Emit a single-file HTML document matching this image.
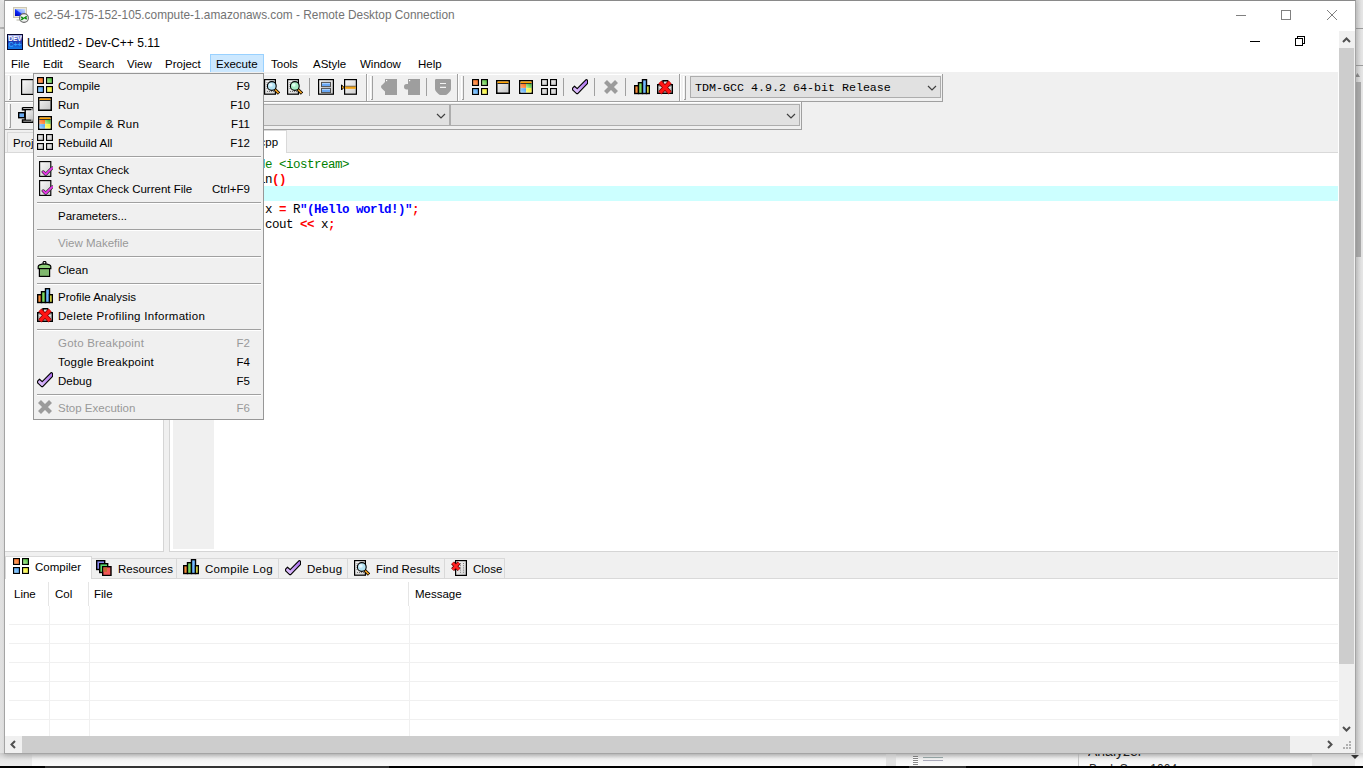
<!DOCTYPE html>
<html><head><meta charset="utf-8">
<style>
*{box-sizing:border-box;margin:0;padding:0}
html,body{width:1363px;height:768px;overflow:hidden;background:#e6e6e6;font-family:"Liberation Sans",sans-serif;font-size:11.5px;color:#000}
.a{position:absolute}
.t{position:absolute;white-space:nowrap;line-height:14px}
svg.i{position:absolute;overflow:visible;width:16px;height:16px}
.code{position:absolute;left:216px;font-family:"Liberation Mono",monospace;font-size:12.5px;letter-spacing:-0.5px;line-height:15px;white-space:pre;color:#000;margin-top:2px}
.m{position:absolute;left:58px;white-space:nowrap;line-height:14px;margin-top:-1px}
.k{position:absolute;right:13px;white-space:nowrap;line-height:14px;text-align:right;margin-top:-1px}
.dis{color:#999}
.sep{position:absolute;left:3px;width:224px;height:2px;border-top:1px solid #a0a0a0;border-bottom:1px solid #fff}
</style></head><body>
<svg width="0" height="0" style="position:absolute">
<defs>
 <linearGradient id="gO" x1="0" y1="1" x2="1" y2="0"><stop offset="0" stop-color="#ffb27a"/><stop offset="1" stop-color="#ff6a1a"/></linearGradient>
 <linearGradient id="gG" x1="0" y1="1" x2="1" y2="0"><stop offset="0" stop-color="#c8f5b0"/><stop offset="1" stop-color="#3cb82c"/></linearGradient>
 <linearGradient id="gB" x1="0" y1="1" x2="1" y2="0"><stop offset="0" stop-color="#a8dcff"/><stop offset="1" stop-color="#4a9cf5"/></linearGradient>
 <linearGradient id="gY" x1="0" y1="1" x2="1" y2="0"><stop offset="0" stop-color="#ffff9a"/><stop offset="1" stop-color="#f5f020"/></linearGradient>
 <linearGradient id="gR" x1="0" y1="0" x2="1" y2="1"><stop offset="0" stop-color="#f4f4f4"/><stop offset="1" stop-color="#c4c4c4"/></linearGradient>
 <linearGradient id="gD" x1="0" y1="0" x2="1" y2="1"><stop offset="0" stop-color="#fafafa"/><stop offset=".5" stop-color="#e4e4e4"/><stop offset="1" stop-color="#cfcfcf"/></linearGradient>
 <linearGradient id="gP" x1="0" y1="1" x2="1" y2="0"><stop offset="0" stop-color="#e8d0ff"/><stop offset="1" stop-color="#a868f0"/></linearGradient>
 <symbol id="i-compile" viewBox="0 0 16 16">
  <g stroke="#000" stroke-width="1.15">
  <rect x="0.58" y="0.58" width="5.85" height="5.85" fill="url(#gO)"/>
  <rect x="9.58" y="0.58" width="5.85" height="5.85" fill="url(#gG)"/>
  <rect x="0.58" y="9.58" width="5.85" height="5.85" fill="url(#gB)"/>
  <rect x="9.58" y="9.58" width="5.85" height="5.85" fill="url(#gY)"/>
  </g>
 </symbol>
 <symbol id="i-rebuild" viewBox="0 0 16 16">
  <g stroke="#000" stroke-width="1.15" fill="url(#gR)">
  <rect x="0.58" y="0.58" width="5.85" height="5.85"/>
  <rect x="9.58" y="0.58" width="5.85" height="5.85"/>
  <rect x="0.58" y="9.58" width="5.85" height="5.85"/>
  <rect x="9.58" y="9.58" width="5.85" height="5.85"/>
  </g>
 </symbol>
 <symbol id="i-run" viewBox="0 0 16 16">
  <rect x="1.75" y="1.75" width="12.5" height="12.5" fill="url(#gR)" stroke="#000" stroke-width="1.5"/>
  <rect x="2.5" y="2.5" width="11" height="1.5" fill="#ffa200"/>
  <rect x="2.5" y="4" width="11" height="0.9" fill="#111"/>
 </symbol>
 <symbol id="i-cr" viewBox="0 0 16 16">
  <rect x="1.75" y="1.75" width="12.5" height="12.5" fill="#fff" stroke="#000" stroke-width="1.5"/>
  <rect x="2.5" y="2.5" width="11" height="1.5" fill="#ffa200"/>
  <rect x="2.5" y="4" width="11" height="0.9" fill="#111"/>
  <rect x="2.5" y="4.9" width="5.5" height="4.3" fill="url(#gO)"/>
  <rect x="8" y="4.9" width="5.5" height="4.3" fill="url(#gG)"/>
  <rect x="2.5" y="9.2" width="5.5" height="4.3" fill="url(#gB)"/>
  <rect x="8" y="9.2" width="5.5" height="4.3" fill="url(#gY)"/>
 </symbol>
 <symbol id="i-check" viewBox="0 0 16 16">
  <path d="M0.6 9.2 L2.5 7.2 L5.2 9.6 L14.1 0.6 L15.6 1.3 L15.6 4.4 L5.7 14.6 L4.6 14.6 L0.6 10.9 Z" fill="url(#gP)" stroke="#000" stroke-width="1.15" stroke-linejoin="round"/>
 </symbol>
 <symbol id="i-xg" viewBox="0 0 16 16">
  <path d="M2.5 2.5 L13.5 13.5 M13.5 2.5 L2.5 13.5" stroke="#9b9b9b" stroke-width="4.2"/>
 </symbol>
 <symbol id="i-chart" viewBox="0 0 16 16">
  <g stroke="#000" stroke-width="1.4">
  <rect x="0.7" y="6.7" width="3.8" height="7.8" fill="#f58a3a"/>
  <rect x="4.5" y="3.7" width="4" height="10.8" fill="#78d860"/>
  <rect x="8.5" y="0.7" width="4" height="13.8" fill="#70b8ff"/>
  <rect x="12.5" y="6.7" width="2.8" height="7.8" fill="#ffff50"/>
  </g>
 </symbol>
 <symbol id="i-delprof" viewBox="0 0 16 16">
  <path d="M0.7 5.7 H4.5 L6 3.5 V1.7 H10.5 L12 3.5 V5.7 H15.3 V14.3 H0.7 Z" fill="#e0e0e0" stroke="#000" stroke-width="1.4"/>
  <path d="M2.5 7.5 H13.5 M2.5 10 H13.5 M2.5 12.5 H13.5" stroke="#777" stroke-dasharray="1 1"/>
  <path d="M3 3.2 L13 13.8 M13 3.2 L3 13.8" stroke="#7a0000" stroke-width="4.6"/>
  <path d="M3 3.2 L13 13.8 M13 3.2 L3 13.8" stroke="#ff1414" stroke-width="3.2"/>
 </symbol>
 <symbol id="i-syn" viewBox="0 0 16 16">
  <rect x="2.6" y="0.6" width="11.2" height="14.8" fill="url(#gD)" stroke="#000" stroke-width="1.15"/>
  <path d="M6.2 10.9 L8.7 13.3 L15.2 6.9" fill="none" stroke="#303030" stroke-width="3.2" stroke-linecap="round" stroke-linejoin="round"/>
  <path d="M6.2 10.9 L8.7 13.3 L15.2 6.9" fill="none" stroke="#e838e8" stroke-width="1.9" stroke-linecap="round" stroke-linejoin="round"/>
 </symbol>
 <symbol id="i-clean" viewBox="0 0 16 16">
  <circle cx="7.5" cy="1.9" r="1.5" fill="#fff" stroke="#000" stroke-width="1.2"/>
  <path d="M1.2 7.6 V5.6 Q1.2 4.4 2.6 3.9 L5 3.1 H10 L12.4 3.9 Q13.8 4.4 13.8 5.6 V7.6 Z" fill="#8fd07a" stroke="#000" stroke-width="1.2"/>
  <rect x="2.4" y="7.6" width="10.2" height="7.8" fill="#80b86e" stroke="#000" stroke-width="1.2"/>
 </symbol>
 <symbol id="i-find" viewBox="0 0 16 16">
  <rect x="0.6" y="0.6" width="10.8" height="14.6" fill="url(#gD)" stroke="#000" stroke-width="1.2"/>
  <path d="M3 3 V11" stroke="#666" stroke-width="0.9" stroke-dasharray="1 1"/>
  <path d="M3 12.5 H10" stroke="#666" stroke-width="0.9" stroke-dasharray="1 1"/>
  <path d="M10.8 10.3 L15 14.5" stroke="#000" stroke-width="3.2"/>
  <path d="M11 10.5 L14.6 14.1" stroke="#f0a020" stroke-width="1.7"/>
  <circle cx="7.8" cy="7" r="4.4" fill="#b4e4f4" stroke="#000" stroke-width="1.1"/>
  <circle cx="6.8" cy="6" r="1.8" fill="#e8f8ff"/>
 </symbol>
 <symbol id="i-find2" viewBox="0 0 16 16">
  <rect x="0.6" y="0.6" width="10.8" height="14.6" fill="url(#gD)" stroke="#000" stroke-width="1.2"/>
  <path d="M3 3 V11" stroke="#666" stroke-width="0.9" stroke-dasharray="1 1"/>
  <path d="M3 12.5 H10" stroke="#666" stroke-width="0.9" stroke-dasharray="1 1"/>
  <path d="M10.8 10.3 L15 14.5" stroke="#000" stroke-width="3.2"/>
  <path d="M11 10.5 L14.6 14.1" stroke="#f0a020" stroke-width="1.7"/>
  <circle cx="7.8" cy="7" r="4.4" fill="#a8ecc4" stroke="#000" stroke-width="1.1"/>
  <circle cx="6.8" cy="6" r="1.8" fill="#e0fff0"/>
 </symbol>
 <symbol id="i-bars" viewBox="0 0 16 16">
  <rect x="0.6" y="0.6" width="14.8" height="14.6" fill="url(#gD)" stroke="#000" stroke-width="1.2"/>
  <rect x="3.5" y="3.4" width="9" height="4.2" fill="#6aa8f4" stroke="#505050" stroke-width="1"/>
  <rect x="3.5" y="9.4" width="9" height="4.2" fill="#6aa8f4" stroke="#505050" stroke-width="1"/>
  <path d="M4 4.5 H12 M4 10.5 H12" stroke="#a8d0ff" stroke-width="1"/>
 </symbol>
 <symbol id="i-obar" viewBox="0 0 16 16">
  <rect x="3.6" y="0.6" width="11.8" height="14.6" fill="url(#gD)" stroke="#000" stroke-width="1.2"/>
  <rect x="4.2" y="6.8" width="10.6" height="1" fill="#444"/>
  <rect x="4.2" y="7.6" width="10.6" height="2.2" fill="#f0a010"/>
  <path d="M0.5 5.8 L3 8.4 L0.5 11 Z" fill="#f0a010" stroke="#000" stroke-width="1"/>
 </symbol>
 <symbol id="i-bmk" viewBox="0 0 16 16">
  <path d="M4 0 H16 V16 H4 V12.5 L1.6 10.2 Q0 9.3 0 7.8 Q0 6.3 1.6 5.4 L4 3 Z" fill="#9e9e9e"/>
  <rect x="5" y="1" width="1.2" height="1.2" fill="#fff"/>
 </symbol>
 <symbol id="i-bmk2" viewBox="0 0 16 16">
  <path d="M4 0 H16 V16 H4 V10.5 H2.5 Q0 10.5 0 7.8 Q0 5 2.5 5 H4 Z" fill="#9e9e9e"/>
  <rect x="5" y="1" width="1.2" height="1.2" fill="#fff"/>
 </symbol>
 <symbol id="i-shield" viewBox="0 0 16 16">
  <path d="M0 1.2 Q0 0 1.2 0 H14.8 Q16 0 16 1.2 V10 Q16 11.5 14.5 13 L12.8 14.8 Q11.6 16 10.4 16 H5.6 Q4.4 16 3.2 14.8 L1.5 13 Q0 11.5 0 10 Z" fill="#9e9e9e"/>
  <path d="M5 4.5 H11 M5 8.4 H11" stroke="#f4f4f4" stroke-width="1.1"/>
 </symbol>
 <symbol id="i-res" viewBox="0 0 16 16">
  <rect x="0.7" y="0.7" width="8" height="8.8" fill="#8a8af0" stroke="#000" stroke-width="1.4"/>
  <rect x="3.7" y="3.7" width="8" height="8.8" fill="#5ad86a" stroke="#000" stroke-width="1.4"/>
  <rect x="6.7" y="6.7" width="8.3" height="8.8" fill="#f25656" stroke="#000" stroke-width="1.4"/>
  <rect x="7.4" y="7.4" width="3.6" height="4.4" fill="#c06a30"/>
 </symbol>
 <symbol id="i-close" viewBox="0 0 16 16">
  <rect x="4.6" y="0.6" width="10.8" height="14.8" fill="url(#gD)" stroke="#000" stroke-width="1.2"/>
  <path d="M9.5 3 V14 M12.5 3 V14" stroke="#777" stroke-width="0.9" stroke-dasharray="1 1.2"/>
  <path d="M1.6 2.8 L8 9.6 M8 2.8 L1.6 9.6" stroke="#500000" stroke-width="4"/>
  <path d="M1.6 2.8 L8 9.6 M8 2.8 L1.6 9.6" stroke="#ff2424" stroke-width="2.6"/>
 </symbol>
 <symbol id="i-newf" viewBox="0 0 16 16">
  <rect x="0.6" y="0.6" width="11.8" height="14.8" fill="url(#gD)" stroke="#000" stroke-width="1.2"/>
 </symbol>
 <symbol id="i-class" viewBox="0 0 16 16">
  <path d="M4.5 0.5 H15.3 V15.3 H4.5 V13 H13.5 M4.5 0.5 V2.8 H13.5" fill="none" stroke="#000" stroke-width="1.4"/>
  <path d="M7.2 2.8 V13" stroke="#000" stroke-width="1.4"/>
  <rect x="8" y="3.5" width="7" height="9" fill="url(#gR)"/>
  <rect x="0.7" y="5.7" width="6" height="5" fill="#6aaaf0" stroke="#000" stroke-width="1.4"/>
 </symbol>
</defs>
</svg>

<!-- ===== background behind RDP ===== -->
<div class="a" style="left:0;top:0;width:4px;height:753px;background:linear-gradient(90deg,#e3e3e3,#efefef)"></div>
<div class="a" style="left:0;top:27px;width:4px;height:2px;background:#b8b8b8"></div>
<div class="a" style="left:1355px;top:0;width:8px;height:768px;background:linear-gradient(90deg,#cfcfcf,#d2d2d2 30%,#e4e4e4 85%,#e6e6e6)"></div>
<div class="a" style="left:1356px;top:28px;width:7px;height:1px;background:#9a9a9a"></div>
<div class="a" style="left:1356px;top:65px;width:7px;height:1px;background:#9a9a9a"></div>
<div class="a" style="left:1356px;top:82px;width:5px;height:175px;background:#a9a9a9"></div>
<svg class="i" style="left:1355px;top:73px;width:5px;height:4px" viewBox="0 0 5 4"><path d="M0 4 L2.5 0 L5 4 Z" fill="#888"/></svg>
<div class="a" style="left:0;top:753px;width:1363px;height:13px;background:linear-gradient(180deg,#cfcfcf,#f2f2f2 45%,#fbfbfb)"></div>
<div class="a" style="left:0;top:753px;width:32px;height:13px;background:linear-gradient(180deg,#d0d0d0,#e6e6e6 50%,#ececec)"></div>
<div class="a" style="left:886px;top:753px;width:10px;height:13px;background:#e2e2e2"></div>
<div class="a" style="left:913px;top:756px;width:5px;height:9px;background:repeating-linear-gradient(180deg,#888 0 1px,#fff 1px 2px)"></div>
<div class="a" style="left:923px;top:757px;width:20px;height:1px;background:#9aa"></div>
<div class="a" style="left:923px;top:760px;width:20px;height:1px;background:#aab"></div>
<div class="a" style="left:1078px;top:753px;width:1px;height:13px;background:#c8c8c8"></div>
<div class="a" style="left:1312px;top:753px;width:43px;height:13px;background:#e8e8e8"></div>
<div class="a" style="left:1088px;top:753px;width:60px;height:7px;overflow:hidden"><div class="t" style="left:0;top:-9px;font-size:14px;line-height:14px;color:#222">Analyzer</div></div>
<div class="a" style="left:1089px;top:763px;width:90px;height:3px;overflow:hidden"><div class="t" style="left:0;top:0;font-size:12px;line-height:12px;color:#333">Book Scan 1004</div></div>
<div class="a" style="left:0;top:766px;width:1363px;height:2px;background:#000"></div>
<div class="a" style="left:45px;top:766px;width:344px;height:2px;background:#333"></div>
<div class="a" style="left:909px;top:766px;width:57px;height:2px;background:#333"></div>

<!-- ===== RDP window ===== -->
<div class="a" style="left:4px;top:0;width:1352px;height:754px;background:#fff;border:1px solid #a4a4a4;border-top-color:#8a8a8a;box-shadow:0 2px 5px rgba(0,0,0,.18)"></div>
<div class="a" style="left:1354px;top:31px;width:1px;height:722px;background:#f0f0f0"></div>
<svg class="i" style="left:12px;top:6px;width:17px;height:17px" viewBox="0 0 17 17">
 <defs><linearGradient id="gScr" x1="0" y1="1" x2="1" y2="0"><stop offset="0" stop-color="#0000b0"/><stop offset=".45" stop-color="#1030ff"/><stop offset=".55" stop-color="#88a8ff"/><stop offset="1" stop-color="#c8dcff"/></linearGradient></defs>
 <rect x="1.5" y="1.5" width="13" height="10" fill="#ebe8dc" stroke="#cdc8b4"/>
 <rect x="3" y="3" width="10" height="7" fill="url(#gScr)"/>
 <rect x="4.5" y="13.2" width="5" height="1.6" fill="#d0d0c8"/>
 <circle cx="12" cy="12" r="4.4" fill="#f2f2f2" stroke="#6a6a6a" stroke-width="1.1"/>
 <path d="M9.2 10.9 L11.2 12.4 L9.2 13.8 M14.8 10.4 L12.8 11.8 L14.8 13.2" fill="none" stroke="#109010" stroke-width="1.5"/>
</svg>
<div class="t" style="left:34px;top:8px;color:#737373;font-size:11.85px">ec2-54-175-152-105.compute-1.amazonaws.com - Remote Desktop Connection</div>
<div class="a" style="left:1236px;top:15px;width:10px;height:1px;background:#808080"></div>
<div class="a" style="left:1281px;top:10px;width:10px;height:10px;border:1px solid #808080"></div>
<svg class="i" style="left:1327px;top:10px;width:10px;height:10px" viewBox="0 0 10 10"><path d="M0 0 L10 10 M10 0 L0 10" stroke="#808080" stroke-width="1"/></svg>

<!-- ===== Dev-C++ title ===== -->
<svg class="i" style="left:7px;top:34px" viewBox="0 0 16 16">
 <defs><linearGradient id="gDev" x1="0" y1="0" x2="0" y2="1"><stop offset="0" stop-color="#b8c0f0"/><stop offset=".45" stop-color="#2038b0"/><stop offset="1" stop-color="#1080f0"/></linearGradient></defs>
 <rect x="0.5" y="0.5" width="15" height="15" fill="url(#gDev)" stroke="#080830"/>
 <text x="8" y="7.2" font-family="Liberation Sans" font-weight="bold" font-size="6.5" fill="#fff" text-anchor="middle">DEV</text>
 <text x="8" y="13.3" font-family="Liberation Sans" font-weight="bold" font-size="7" fill="#30a0ff" text-anchor="middle">C++</text>
</svg>
<div class="t" style="left:27px;top:36px;font-size:12.1px">Untitled2 - Dev-C++ 5.11</div>
<div class="a" style="left:1250px;top:41px;width:10px;height:1px;background:#000"></div>
<div class="a" style="left:1297px;top:36px;width:8px;height:8px;border:1px solid #000"></div>
<div class="a" style="left:1295px;top:38px;width:8px;height:8px;border:1px solid #000;background:#fff"></div>

<!-- ===== menu bar ===== -->
<div class="a" style="left:210px;top:54px;width:54px;height:19px;background:#cce8ff;border:1px solid #99d1ff"></div>
<div class="t" style="left:11px;top:57px">File</div>
<div class="t" style="left:43px;top:57px">Edit</div>
<div class="t" style="left:78px;top:57px">Search</div>
<div class="t" style="left:127px;top:57px">View</div>
<div class="t" style="left:165px;top:57px">Project</div>
<div class="t" style="left:216px;top:57px">Execute</div>
<div class="t" style="left:271px;top:57px">Tools</div>
<div class="t" style="left:313px;top:57px">AStyle</div>
<div class="t" style="left:360px;top:57px">Window</div>
<div class="t" style="left:418px;top:57px">Help</div>

<!-- ===== toolbar area ===== -->
<div class="a" style="left:5px;top:72px;width:1333px;height:81px;background:#f0f0f0"></div>
<!-- row1 -->
<div class="a" style="left:5px;top:74px;width:938px;height:1px;background:#fff"></div>
<div class="a" style="left:5px;top:101px;width:938px;height:1px;background:#a0a0a0"></div>
<div class="a" style="left:5px;top:102px;width:797px;height:1px;background:#fff"></div>
<div class="a" style="left:366px;top:74px;width:1px;height:28px;background:#a0a0a0"></div>
<div class="a" style="left:367px;top:74px;width:1px;height:27px;background:#fff"></div>
<div class="a" style="left:457px;top:74px;width:1px;height:28px;background:#a0a0a0"></div>
<div class="a" style="left:458px;top:74px;width:1px;height:27px;background:#fff"></div>
<div class="a" style="left:679px;top:74px;width:1px;height:28px;background:#a0a0a0"></div>
<div class="a" style="left:680px;top:74px;width:1px;height:27px;background:#fff"></div>
<div class="a" style="left:942px;top:74px;width:1px;height:28px;background:#a0a0a0"></div>
<!-- grips row1 -->
<div class="a" style="left:8px;top:76px;width:1px;height:24px;background:#fff"></div><div class="a" style="left:10px;top:76px;width:1px;height:24px;background:#a0a0a0"></div><div class="a" style="left:9px;top:99px;width:2px;height:1px;background:#a0a0a0"></div>
<div class="a" style="left:370px;top:76px;width:1px;height:24px;background:#fff"></div><div class="a" style="left:372px;top:76px;width:1px;height:24px;background:#a0a0a0"></div><div class="a" style="left:371px;top:99px;width:2px;height:1px;background:#a0a0a0"></div>
<div class="a" style="left:461px;top:76px;width:1px;height:24px;background:#fff"></div><div class="a" style="left:463px;top:76px;width:1px;height:24px;background:#a0a0a0"></div><div class="a" style="left:462px;top:99px;width:2px;height:1px;background:#a0a0a0"></div>
<div class="a" style="left:683px;top:76px;width:1px;height:24px;background:#fff"></div><div class="a" style="left:685px;top:76px;width:1px;height:24px;background:#a0a0a0"></div><div class="a" style="left:684px;top:99px;width:2px;height:1px;background:#a0a0a0"></div>
<!-- row1 icons -->
<svg class="i" style="left:21px;top:79px"><use href="#i-newf"/></svg>
<svg class="i" style="left:264px;top:79px"><use href="#i-find"/></svg>
<svg class="i" style="left:287px;top:79px"><use href="#i-find2"/></svg>
<div class="a" style="left:309px;top:78px;width:1px;height:18px;background:#a0a0a0"></div>
<svg class="i" style="left:318px;top:79px"><use href="#i-bars"/></svg>
<svg class="i" style="left:341px;top:79px"><use href="#i-obar"/></svg>
<svg class="i" style="left:381px;top:79px"><use href="#i-bmk"/></svg>
<svg class="i" style="left:404px;top:79px"><use href="#i-bmk2"/></svg>
<div class="a" style="left:426px;top:78px;width:1px;height:18px;background:#a0a0a0"></div>
<svg class="i" style="left:435px;top:79px"><use href="#i-shield"/></svg>
<svg class="i" style="left:472px;top:79px"><use href="#i-compile"/></svg>
<svg class="i" style="left:495px;top:79px"><use href="#i-run"/></svg>
<svg class="i" style="left:518px;top:79px"><use href="#i-cr"/></svg>
<svg class="i" style="left:541px;top:79px"><use href="#i-rebuild"/></svg>
<div class="a" style="left:563px;top:78px;width:1px;height:18px;background:#a0a0a0"></div>
<svg class="i" style="left:572px;top:79px"><use href="#i-check"/></svg>
<div class="a" style="left:594px;top:78px;width:1px;height:18px;background:#a0a0a0"></div>
<svg class="i" style="left:603px;top:79px"><use href="#i-xg"/></svg>
<div class="a" style="left:625px;top:78px;width:1px;height:18px;background:#a0a0a0"></div>
<svg class="i" style="left:634px;top:79px"><use href="#i-chart"/></svg>
<svg class="i" style="left:657px;top:79px"><use href="#i-delprof"/></svg>
<!-- compiler combo -->
<div class="a" style="left:690px;top:76px;width:251px;height:22px;background:#e1e1e1;border:1px solid #adadad"></div>
<div class="t" style="left:695px;top:81px;font-family:'Liberation Mono',monospace;font-size:11.67px;color:#000">TDM-GCC 4.9.2 64-bit Release</div>
<svg class="i" style="left:928px;top:86px;width:8px;height:4px" viewBox="0 0 8 4"><path d="M0 0 L4 4 L8 0" fill="none" stroke="#404040" stroke-width="1.2"/></svg>
<!-- row2 -->
<div class="a" style="left:5px;top:129px;width:797px;height:1px;background:#a0a0a0"></div>
<div class="a" style="left:801px;top:102px;width:1px;height:28px;background:#a0a0a0"></div>
<div class="a" style="left:8px;top:104px;width:1px;height:24px;background:#fff"></div><div class="a" style="left:10px;top:104px;width:1px;height:24px;background:#a0a0a0"></div><div class="a" style="left:9px;top:127px;width:2px;height:1px;background:#a0a0a0"></div>
<svg class="i" style="left:18px;top:107px"><use href="#i-class"/></svg>
<div class="a" style="left:150px;top:104px;width:300px;height:22px;background:#e1e1e1;border:1px solid #adadad"></div>
<svg class="i" style="left:437px;top:114px;width:8px;height:4px" viewBox="0 0 8 4"><path d="M0 0 L4 4 L8 0" fill="none" stroke="#404040" stroke-width="1.2"/></svg>
<div class="a" style="left:450px;top:104px;width:350px;height:22px;background:#e1e1e1;border:1px solid #adadad"></div>
<svg class="i" style="left:787px;top:114px;width:8px;height:4px" viewBox="0 0 8 4"><path d="M0 0 L4 4 L8 0" fill="none" stroke="#404040" stroke-width="1.2"/></svg>

<!-- ===== tabs row ===== -->
<div class="a" style="left:7px;top:132px;width:120px;height:21px;background:#f0f0f0;border:1px solid #d9d9d9;border-bottom:none"></div>
<div class="t" style="left:13px;top:136px">Project</div>
<div class="a" style="left:5px;top:152px;width:159px;height:1px;background:#d9d9d9"></div>
<div class="a" style="left:170px;top:152px;width:1168px;height:1px;background:#d9d9d9"></div>
<div class="a" style="left:172px;top:130px;width:115px;height:23px;background:#fff;border:1px solid #d9d9d9;border-bottom:none"></div>
<div class="t" style="left:211px;top:135px">Untitled2.cpp</div>

<!-- ===== project panel ===== -->
<div class="a" style="left:5px;top:153px;width:159px;height:399px;background:#fff;border-right:1px solid #d5d5d5;border-bottom:1px solid #d5d5d5"></div>
<div class="a" style="left:164px;top:130px;width:5px;height:422px;background:#f0f0f0"></div>
<!-- ===== editor ===== -->
<div class="a" style="left:169px;top:153px;width:1169px;height:399px;background:#fff;border-left:1px solid #d5d5d5;border-bottom:1px solid #d5d5d5"></div>
<div class="a" style="left:173px;top:153px;width:41px;height:396px;background:#f0f0f0"></div>
<div class="a" style="left:171px;top:186px;width:1167px;height:15px;background:#ccffff"></div>
<div class="code" style="top:156px"><span style="color:#008000">#include &lt;iostream&gt;</span></div>
<div class="code" style="top:171px">int main<span style="color:#ff0000;font-weight:bold">()</span></div>
<div class="code" style="top:186px"><span style="color:#ff0000;font-weight:bold">{</span></div>
<div class="code" style="top:201px">  auto x <span style="color:#ff0000;font-weight:bold">=</span> R<span style="color:#0000ff;font-weight:bold">"(Hello world!)"</span><span style="color:#ff0000;font-weight:bold">;</span></div>
<div class="code" style="top:216px">  std::cout <span style="color:#ff0000;font-weight:bold">&lt;&lt;</span> x<span style="color:#ff0000;font-weight:bold">;</span></div>
<div class="code" style="top:231px"><span style="color:#ff0000;font-weight:bold">}</span></div>

<!-- ===== bottom tabs ===== -->
<div class="a" style="left:5px;top:552px;width:1333px;height:27px;background:#f0f0f0"></div>
<div class="a" style="left:91px;top:578px;width:1247px;height:1px;background:#d9d9d9"></div>
<div class="a" style="left:5px;top:556px;width:87px;height:23px;background:#fff;border:1px solid #d9d9d9;border-bottom:none"></div>
<svg class="i" style="left:13px;top:558px"><use href="#i-compile"/></svg>
<div class="t" style="left:35px;top:560px">Compiler</div>
<div class="a" style="left:91px;top:558px;width:414px;height:21px;border:1px solid #d9d9d9;border-bottom:none"></div>
<div class="a" style="left:176px;top:559px;width:1px;height:19px;background:#d9d9d9"></div>
<div class="a" style="left:278px;top:559px;width:1px;height:19px;background:#d9d9d9"></div>
<div class="a" style="left:347px;top:559px;width:1px;height:19px;background:#d9d9d9"></div>
<div class="a" style="left:444px;top:559px;width:1px;height:19px;background:#d9d9d9"></div>
<svg class="i" style="left:96px;top:560px"><use href="#i-res"/></svg>
<div class="t" style="left:118px;top:562px">Resources</div>
<svg class="i" style="left:183px;top:559px"><use href="#i-chart"/></svg>
<div class="t" style="left:205px;top:562px;letter-spacing:0.3px">Compile Log</div>
<svg class="i" style="left:285px;top:560px"><use href="#i-check"/></svg>
<div class="t" style="left:307px;top:562px;letter-spacing:0.3px">Debug</div>
<svg class="i" style="left:354px;top:560px"><use href="#i-find"/></svg>
<div class="t" style="left:376px;top:562px">Find Results</div>
<svg class="i" style="left:451px;top:560px"><use href="#i-close"/></svg>
<div class="t" style="left:473px;top:562px">Close</div>

<!-- ===== compiler table ===== -->
<div class="a" style="left:5px;top:579px;width:1333px;height:157px;background:#fff"></div>
<div class="t" style="left:14px;top:587px">Line</div>
<div class="t" style="left:55px;top:587px">Col</div>
<div class="t" style="left:94px;top:587px">File</div>
<div class="t" style="left:415px;top:587px">Message</div>
<div class="a" style="left:48px;top:582px;width:1px;height:24px;background:#e5e5e5"></div>
<div class="a" style="left:88px;top:582px;width:1px;height:24px;background:#e5e5e5"></div>
<div class="a" style="left:408px;top:582px;width:1px;height:24px;background:#e5e5e5"></div>
<div class="a" style="left:49px;top:606px;width:1px;height:130px;background:#f0f0f0"></div>
<div class="a" style="left:89px;top:606px;width:1px;height:130px;background:#f0f0f0"></div>
<div class="a" style="left:409px;top:606px;width:1px;height:130px;background:#f0f0f0"></div>
<div class="a" style="left:9px;top:624px;width:1329px;height:1px;background:#f0f0f0"></div>
<div class="a" style="left:9px;top:643px;width:1329px;height:1px;background:#f0f0f0"></div>
<div class="a" style="left:9px;top:662px;width:1329px;height:1px;background:#f0f0f0"></div>
<div class="a" style="left:9px;top:681px;width:1329px;height:1px;background:#f0f0f0"></div>
<div class="a" style="left:9px;top:700px;width:1329px;height:1px;background:#f0f0f0"></div>
<div class="a" style="left:9px;top:719px;width:1329px;height:1px;background:#f0f0f0"></div>

<!-- ===== RDP scrollbars ===== -->
<div class="a" style="left:1339px;top:31px;width:15px;height:705px;background:#f0f0f0"></div>
<div class="a" style="left:1339px;top:48px;width:15px;height:616px;background:#cdcdcd"></div>
<svg class="i" style="left:1342px;top:37px;width:9px;height:6px" viewBox="0 0 9 6"><path d="M1 5 L4.5 1.5 L8 5" fill="none" stroke="#505050" stroke-width="2"/></svg>
<svg class="i" style="left:1342px;top:726px;width:9px;height:6px" viewBox="0 0 9 6"><path d="M1 1 L4.5 4.5 L8 1" fill="none" stroke="#505050" stroke-width="2"/></svg>
<div class="a" style="left:5px;top:736px;width:1350px;height:17px;background:#f0f0f0"></div>
<div class="a" style="left:22px;top:736px;width:1268px;height:17px;background:#cdcdcd"></div>
<svg class="i" style="left:10px;top:740px;width:6px;height:9px" viewBox="0 0 6 9"><path d="M5 1 L1.5 4.5 L5 8" fill="none" stroke="#505050" stroke-width="2"/></svg>
<svg class="i" style="left:1327px;top:740px;width:6px;height:9px" viewBox="0 0 6 9"><path d="M1 1 L4.5 4.5 L1 8" fill="none" stroke="#505050" stroke-width="2"/></svg>
<svg class="i" style="left:1343px;top:741px;width:9px;height:9px" viewBox="0 0 9 9"><g fill="#b0b0b0"><rect x="6" y="0" width="2" height="2"/><rect x="3" y="3" width="2" height="2"/><rect x="6" y="3" width="2" height="2"/><rect x="0" y="6" width="2" height="2"/><rect x="3" y="6" width="2" height="2"/><rect x="6" y="6" width="2" height="2"/></g></svg>
<svg class="i" style="left:1351px;top:755px;width:8px;height:4px" viewBox="0 0 8 4"><path d="M0 0 H8 L4 4 Z" fill="#333"/></svg>

<!-- ===== Execute menu ===== -->
<div class="a" style="left:33px;top:73px;width:231px;height:347px;background:#f0f0f0;border:1px solid #979797">
 <svg class="i" style="left:3px;top:3px"><use href="#i-compile"/></svg>
 <div class="m" style="left:24px;top:6px">Compile</div><div class="k" style="top:6px">F9</div>
 <svg class="i" style="left:3px;top:22px"><use href="#i-run"/></svg>
 <div class="m" style="left:24px;top:25px">Run</div><div class="k" style="top:25px">F10</div>
 <svg class="i" style="left:3px;top:41px"><use href="#i-cr"/></svg>
 <div class="m" style="left:24px;top:44px;letter-spacing:0.3px">Compile &amp; Run</div><div class="k" style="top:44px">F11</div>
 <svg class="i" style="left:3px;top:60px"><use href="#i-rebuild"/></svg>
 <div class="m" style="left:24px;top:63px">Rebuild All</div><div class="k" style="top:63px">F12</div>
 <div class="sep" style="top:82px"></div>
 <svg class="i" style="left:3px;top:87px"><use href="#i-syn"/></svg>
 <div class="m" style="left:24px;top:90px">Syntax Check</div>
 <svg class="i" style="left:3px;top:106px"><use href="#i-syn"/></svg>
 <div class="m" style="left:24px;top:109px">Syntax Check Current File</div><div class="k" style="top:109px">Ctrl+F9</div>
 <div class="sep" style="top:128px"></div>
 <div class="m" style="left:24px;top:136px">Parameters...</div>
 <div class="sep" style="top:155px"></div>
 <div class="m dis" style="left:24px;top:163px">View Makefile</div>
 <div class="sep" style="top:182px"></div>
 <svg class="i" style="left:3px;top:187px"><use href="#i-clean"/></svg>
 <div class="m" style="left:24px;top:190px">Clean</div>
 <div class="sep" style="top:209px"></div>
 <svg class="i" style="left:3px;top:214px"><use href="#i-chart"/></svg>
 <div class="m" style="left:24px;top:217px">Profile Analysis</div>
 <svg class="i" style="left:3px;top:233px"><use href="#i-delprof"/></svg>
 <div class="m" style="left:24px;top:236px;letter-spacing:0.3px">Delete Profiling Information</div>
 <div class="sep" style="top:255px"></div>
 <div class="m dis" style="left:24px;top:263px;letter-spacing:0.2px">Goto Breakpoint</div><div class="k dis" style="top:263px">F2</div>
 <div class="m" style="left:24px;top:282px;letter-spacing:0.23px">Toggle Breakpoint</div><div class="k" style="top:282px">F4</div>
 <svg class="i" style="left:3px;top:298px"><use href="#i-check"/></svg>
 <div class="m" style="left:24px;top:301px">Debug</div><div class="k" style="top:301px">F5</div>
 <div class="sep" style="top:320px"></div>
 <svg class="i" style="left:3px;top:325px"><use href="#i-xg"/></svg>
 <div class="m dis" style="left:24px;top:328px">Stop Execution</div><div class="k dis" style="top:328px">F6</div>
</div>
</body></html>
